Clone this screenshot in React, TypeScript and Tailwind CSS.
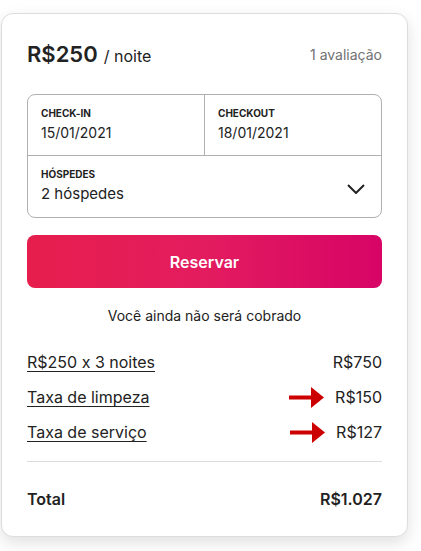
import React from "react";

function Arrow() {
  return (
    <svg width="35" height="21" viewBox="0 0 35 21" className="block">
      <rect x="0" y="8.5" width="24" height="4" fill="#cc0000" />
      <polygon points="22,0 35,10.5 22,21" fill="#cc0000" />
    </svg>
  );
}

export default function App() {
  const font = {
    fontFamily: "Inter, 'Noto Sans', sans-serif",
    fontFeatureSettings: "'calt' 0",
  };
  return (
    <div className="w-[421px] h-[551px] bg-white" style={font}>
      <div className="ml-[1px] pt-[13px]">
        <div className="w-[407px] rounded-[12px] border border-[#dddddd] bg-white shadow-[0_6px_16px_rgba(0,0,0,0.12)] px-[25px] pt-[27px] pb-[25px] text-[#222222]">
          <div className="flex items-center justify-between h-[28px]">
            <div className="leading-[28px] whitespace-nowrap">
              <span className="text-[22px] font-semibold">R$250</span>
              <span className="text-[16px] ml-[6px]">/ noite</span>
            </div>
            <span className="text-[14px] leading-[18px] text-[#717171]">1 avaliação</span>
          </div>

          <div className="mt-[25px] rounded-[8px] border border-[#b0b0b0]">
            <div className="flex h-[61px] border-b border-[#b0b0b0]">
              <div className="w-[177px] border-r border-[#b0b0b0] pl-[13px] pt-[10px]">
                <div className="text-[10px] font-bold leading-[16px] uppercase">Check-in</div>
                <div className="text-[14px] leading-[18px] mt-[3px] text-[#222222]">15/01/2021</div>
              </div>
              <div className="flex-1 pl-[13px] pt-[10px]">
                <div className="text-[10px] font-bold leading-[16px] uppercase">Checkout</div>
                <div className="text-[14px] leading-[18px] mt-[3px] text-[#222222]">18/01/2021</div>
              </div>
            </div>
            <div className="flex h-[61px] items-start justify-between pl-[13px] pr-[16px] pt-[10px]">
              <div>
                <div className="text-[10px] font-bold leading-[16px] uppercase">Hóspedes</div>
                <div className="text-[15px] leading-[18px] mt-[3px]">2 hóspedes</div>
              </div>
              <svg width="18" height="10" viewBox="0 0 18 10" className="mt-[18px]">
                <path d="M1 1 L9 9 L17 1" fill="none" stroke="#222222" strokeWidth="2" />
              </svg>
            </div>
          </div>

          <button className="mt-[17px] w-full h-[53px] rounded-[8px] bg-[linear-gradient(to_right,#e61e4d_0%,#e31c5f_50%,#d70466_100%)] text-white text-[16px] font-semibold">
            Reservar
          </button>

          <div className="mt-[19px] text-center text-[14px] leading-[18px] text-[#222222]">
            Você ainda não será cobrado
          </div>

          <div className="mt-[25px] flex flex-col gap-[11px] text-[16px] leading-[24px]">
            <div className="flex items-center justify-between">
              <span className="underline underline-offset-[3px]">R$250 x 3 noites</span>
              <span>R$750</span>
            </div>
            <div className="flex items-center justify-between">
              <span className="underline underline-offset-[3px]">Taxa de limpeza</span>
              <div className="flex items-center gap-[11px]">
                <Arrow />
                <span>R$150</span>
              </div>
            </div>
            <div className="flex items-center justify-between">
              <span className="underline underline-offset-[3px]">Taxa de serviço</span>
              <div className="flex items-center gap-[11px]">
                <Arrow />
                <span>R$127</span>
              </div>
            </div>
          </div>

          <div className="mt-[17px] border-t border-[#dddddd]" />

          <div className="mt-[25px] flex items-center justify-between text-[16px] leading-[24px] font-semibold">
            <span>Total</span>
            <span>R$1.027</span>
          </div>
        </div>
      </div>
    </div>
  );
}
